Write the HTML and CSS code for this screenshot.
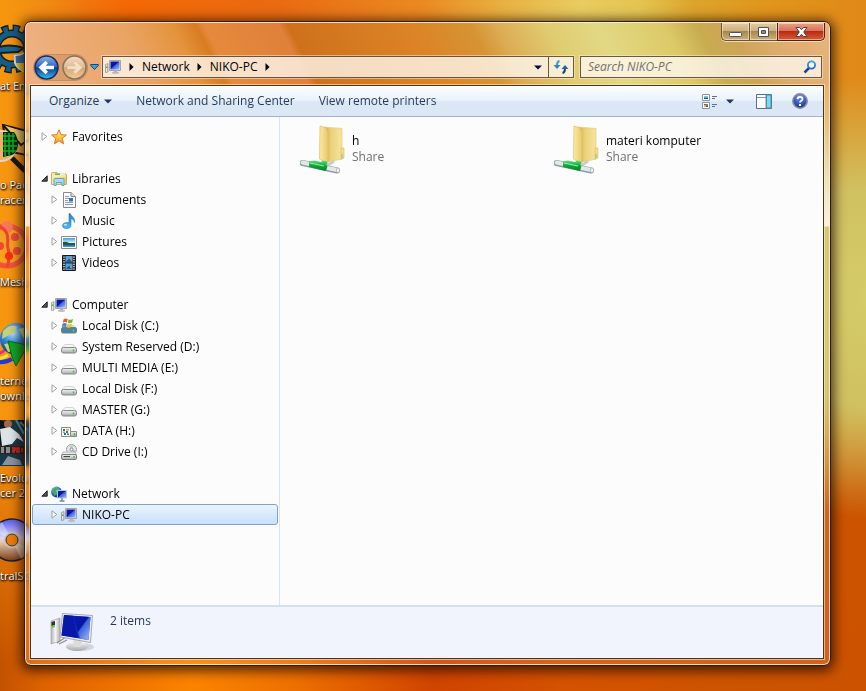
FILE: index.html
```html
<!DOCTYPE html>
<html lang="en">
<head>
<meta charset="utf-8">
<title>NIKO-PC</title>
<link rel="stylesheet" href="styles.css">
</head>
<body>
<svg class="defs" aria-hidden="true">
  <defs>
    <linearGradient id="screen" x1="0" y1="0" x2="1" y2="1"><stop offset="0" stop-color="#0a1cb4"/><stop offset=".45" stop-color="#0614a4"/><stop offset=".5" stop-color="#3a62dc"/><stop offset="1" stop-color="#a8c0f4"/></linearGradient>
    <linearGradient id="grey" x1="0" y1="0" x2="0" y2="1"><stop offset="0" stop-color="#f4f4f4"/><stop offset="1" stop-color="#a8a8ac"/></linearGradient>
    <linearGradient id="greyside" x1="0" y1="0" x2="1" y2="0"><stop offset="0" stop-color="#b4b4b4"/><stop offset=".5" stop-color="#f4f4f4"/><stop offset="1" stop-color="#b0b0b0"/></linearGradient>
    <linearGradient id="gold" x1="0" y1="0" x2="1" y2="0"><stop offset="0" stop-color="#fbeaa4"/><stop offset="1" stop-color="#e9ca66"/></linearGradient>
    <linearGradient id="goldback" x1="0" y1="0" x2="1" y2="0"><stop offset="0" stop-color="#d0aa48"/><stop offset=".4" stop-color="#ead27c"/><stop offset="1" stop-color="#f7e59c"/></linearGradient>
    <linearGradient id="star" x1="0" y1="0" x2="0" y2="1"><stop offset="0" stop-color="#fff3a0"/><stop offset=".6" stop-color="#fdc030"/><stop offset="1" stop-color="#f08a20"/></linearGradient>
    <linearGradient id="note" x1="0" y1="0" x2="0" y2="1"><stop offset="0" stop-color="#2a80cc"/><stop offset="1" stop-color="#48b8ee"/></linearGradient>
    <linearGradient id="sky" x1="0" y1="0" x2="0" y2="1"><stop offset="0" stop-color="#3a9ade"/><stop offset=".5" stop-color="#d4f2f6"/><stop offset=".56" stop-color="#1a6a60"/><stop offset=".75" stop-color="#1d5a80"/><stop offset="1" stop-color="#48b0d4"/></linearGradient>
    <linearGradient id="green" x1="0" y1="0" x2="0" y2="1"><stop offset="0" stop-color="#5fe080"/><stop offset=".5" stop-color="#0aa838"/><stop offset="1" stop-color="#04842a"/></linearGradient>
    <radialGradient id="globe" cx=".4" cy=".3" r=".7"><stop offset="0" stop-color="#b8e8fc"/><stop offset=".5" stop-color="#2d84d8"/><stop offset="1" stop-color="#0a3484"/></radialGradient>
    <radialGradient id="help" cx=".5" cy=".2" r=".8"><stop offset="0" stop-color="#6f96ec"/><stop offset="1" stop-color="#10309c"/></radialGradient>
    <linearGradient id="back" x1="0" y1="0" x2="0" y2="1"><stop offset="0" stop-color="#8ab4ec"/><stop offset=".48" stop-color="#2a64c4"/><stop offset=".52" stop-color="#08389c"/><stop offset="1" stop-color="#30c4f4"/></linearGradient>
    <linearGradient id="forward" x1="0" y1="0" x2="0" y2="1"><stop offset="0" stop-color="#f4dcc4"/><stop offset=".48" stop-color="#e4bc94"/><stop offset=".52" stop-color="#d8a470"/><stop offset="1" stop-color="#f0cc9c"/></linearGradient>
    <linearGradient id="lens" x1="0" y1="0" x2="0" y2="1"><stop offset="0" stop-color="#3aa4dc"/><stop offset="1" stop-color="#2468bc"/></linearGradient>
    <linearGradient id="disc" x1="0" y1="0" x2="0" y2="1"><stop offset="0" stop-color="#5458f0"/><stop offset=".45" stop-color="#dcd8f4"/><stop offset=".55" stop-color="#e4c8b0"/><stop offset="1" stop-color="#7c3c18"/></linearGradient>

    <symbol id="i-closed" viewBox="0 0 7 9"><path d="M1 .8 5.8 4.5 1 8.2Z" fill="#fff" stroke="#a0a0a0"/></symbol>
    <symbol id="i-open" viewBox="0 0 7 7"><path d="M6.2.8V6.2H.8Z" fill="#555" stroke="#222"/></symbol>
    <symbol id="i-star" viewBox="0 0 16 16"><path d="M8 .7 10 5.700 15.400 6 11.200 9.400 12.700 14.900 8 11.800 3.300 14.900 4.800 9.400.6 6 6 5.700Z" fill="url(#star)" stroke="#dc7a28"/></symbol>
    <symbol id="i-library" viewBox="0 0 16 16">
      <path d="M.5 13.500V2.500Q.5 1.500 1.500 1.500H6L7 3H14.500Q15.500 3 15.500 4V13.500Z" fill="url(#gold)" stroke="#d0ae58"/>
      <path d="M4 2.500H9V4H4Z" fill="#68b858"/><path d="M9 2.500H14V4H9Z" fill="#e8f0f8"/><path d="M1 5H15" stroke="#fff8d0"/>
      <path d="M3 14.500V8.500Q3 7.500 4 7.500H12Q13 7.500 13 8.500V14.500H10.800V11.500H5.200V14.500Z" fill="#a8dcf4" stroke="#4898c4" stroke-width=".8"/>
    </symbol>
    <symbol id="i-document" viewBox="0 0 16 16">
      <path d="M2.500.5H10L14.500 4.500V15.500H2.500Z" fill="#fcfcfc" stroke="#888"/><path d="M10 .5V4.500H14.500" fill="#dde" stroke="#888"/>
      <path d="M4 4.500H8M4 6.500H8M4 8.500H7M4 10.500H12M4 12.500H12" stroke="#8a9cb8"/><path d="M8 6H12V9.500H8Z" fill="#2f74b8"/>
    </symbol>
    <symbol id="i-music" viewBox="0 0 16 16">
      <path d="M8 .5 9.500.8C10 3.500 14.500 4.500 13.500 9.500 13 7 11.500 6 10 5.800V12Q10 15.500 5.500 15.500 1.500 15.500 1.500 12.700 1.500 9.800 5.500 9.500 7 9.400 8 10Z" fill="url(#note)" stroke="#2c78b8" stroke-width=".6"/>
      <ellipse cx="4.500" cy="11.700" rx="1.800" ry="1" fill="#b4e4fa"/>
    </symbol>
    <symbol id="i-picture" viewBox="0 0 16 16"><path d="M.5 2.500H15.500V14.500H.5Z" fill="#fff" stroke="#8c8c8c"/><path d="M2 4H14V13H2Z" fill="url(#sky)"/><path d="M2 8Q5 7 8 9L14 9V10H2Z" fill="#225a34"/></symbol>
    <symbol id="i-video" viewBox="0 0 16 16">
      <path d="M1.500.5H14.500V15.500H1.500Z" fill="#2c2c30" stroke="#18181c"/><path d="M4.500 1H11.500V7.300H4.500ZM4.500 8.500H11.500V15H4.500Z" fill="#4aa4e0"/>
      <path d="M5 7 8 3.500 11 7ZM5 14 8 10.500 11 14" fill="#24588c"/><path d="M9 2.500H11V4.500H9ZM9 11H11V13H9Z" fill="#d8845c"/>
      <path d="M3 1.500V15M13 1.500V15" stroke="#fff" stroke-width="1.200" stroke-dasharray="1.200 1.200"/>
    </symbol>
    <symbol id="i-computer" viewBox="0 0 16 16">
      <path d="M.5 5.500 3 4.500V13L.5 13.500Z" fill="url(#greyside)" stroke="#909090" stroke-width=".7"/><path d="M1 7.500H2.500V9H1Z" fill="#48b838"/>
      <path d="M4.500 1.500H15.500V11.500H4.500Z" fill="#e0e0e4" stroke="#a4a4a8"/><path d="M5.500 2.500H14.500V10.500H5.500Z" fill="url(#screen)"/>
      <path d="M9 11.500H12V13H9Z" fill="#b4b4b4"/><ellipse cx="10.500" cy="13.700" rx="3.600" ry="1.200" fill="#bcbcc0"/>
    </symbol>
    <symbol id="i-drive" viewBox="0 0 16 16">
      <path d="M1 8.500Q3 5.500 5 5.500H11Q13 5.500 15 8.500Z" fill="#f8f8f8" stroke="#c4c4c4" stroke-width=".7"/>
      <rect x=".5" y="8.500" width="15" height="5.500" rx="2" fill="url(#grey)" stroke="#85858a"/><path d="M12.500 10.500V12.500" stroke="#30c830" stroke-width="1.400"/>
    </symbol>
    <symbol id="i-system" viewBox="0 0 16 16">
      <path d="M1 10 3 7H13L15 10Z" fill="#d8dce0"/><rect x=".5" y="9.500" width="15" height="5.500" rx="1.500" fill="#4a86a0" stroke="#707c84"/><path d="M12.500 11.500V13.500" stroke="#50e050" stroke-width="1.400"/>
      <path d="M2.500 1.500Q4.500-.4 6.700 1L6 4.500Q4 3.300 1.800 4.800Z" fill="#e8582c"/><path d="M7.500 1.300Q9.800 2.500 12 1L11.200 4.500Q9 6 6.800 4.800Z" fill="#70b838"/>
      <path d="M1.500 5.700Q3.800 4.300 5.800 5.500L5 9Q3 7.800.8 9Z" fill="#3c88dc"/><path d="M6.500 5.800Q8.800 7 11 5.500L10.200 9Q8 10.300 5.800 9.200Z" fill="#f8c020"/>
    </symbol>
    <symbol id="i-data" viewBox="0 0 16 16">
      <path d="M.5 4.500H9.500V13.500H.5Z" fill="#f4fcfc" stroke="#888"/><path d="M2 6H4V8H2ZM5 8H7V10H5ZM3 10H5V12H3Z" fill="#386c88"/><path d="M5 6H8V7.500H5Z" fill="#e4a030"/><path d="M2 8.500H4V10H2Z" fill="#6ab0a8"/><path d="M6 10.500H8V12H6Z" fill="#587838"/>
      <path d="M9.500 8.500H15.500V13.500H9.500Z" fill="url(#grey)" stroke="#888"/><path d="M13.500 10V12.500" stroke="#30c830" stroke-width="1.400"/>
    </symbol>
    <symbol id="i-cd" viewBox="0 0 16 16">
      <circle cx="10.500" cy="5.500" r="5" fill="#e8e8ec" stroke="#9c9ca0"/><path d="M10.500 5.500 8 1.500 13 1.500Z" fill="#b4d8b8"/><path d="M10.500 5.500 15 7 13 9.500Z" fill="#b8b0d8"/><circle cx="10.500" cy="5.500" r="1.500" fill="#fff" stroke="#888"/>
      <path d="M2 8H14L15.500 11H.5Z" fill="#ececec" stroke="#a0a0a0" stroke-width=".7"/><rect x=".5" y="10.500" width="15" height="5" rx="1.500" fill="url(#grey)" stroke="#7c7c80"/><path d="M2.500 12.500H9" stroke="#444"/><path d="M13 12V14" stroke="#30c830" stroke-width="1.400"/>
    </symbol>
    <symbol id="i-network" viewBox="0 0 16 16">
      <circle cx="5.500" cy="6" r="5.400" fill="url(#globe)"/><path d="M2 3Q5 .5 7 2.500L5 5 6 8 3.500 10 2.500 6.500 1 6Z" fill="#3cb450"/>
      <path d="M6.500 4.500H15.500V12H6.500Z" fill="url(#screen)" stroke="#b8c4e0"/><path d="M11 12V14.500M8.500 15H13.500" stroke="#7484a4" stroke-width="1.500"/>
    </symbol>
    <symbol id="i-share" viewBox="0 0 48 50">
      <path d="M24 3 42 4.500V35L28 38Z" fill="url(#goldback)" stroke="#e4cc80" stroke-width=".7"/>
      <path d="M20 2 26 4 28 9V40L19.500 35Z" fill="url(#gold)" stroke="#dcbf6a" stroke-width=".7"/><path d="M41 24H44V34L41 35.500Z" fill="#f4dc90" stroke="#d8b860" stroke-width=".6"/><path d="M42 30V34" stroke="#6cc4c4"/>
      <path d="M25 42Q31 40 34 37" fill="none" stroke="#c8ccd0" stroke-width="3"/>
      <path d="M2.500 39 37 46.500" stroke="#909ca0" stroke-width="6" stroke-linecap="round"/><path d="M2.500 38.500 37 46" stroke="#e0e8ea" stroke-width="4" stroke-linecap="round"/>
      <path d="M9 37.500 14 36.500 21 38 23 36.500 27 37.500 27 40 26 41 27.500 42 26 47 9 43Z" fill="url(#green)"/>
      <path d="M10 39 24 42" stroke="#8cf0a0" stroke-width="1.200"/><ellipse cx="38" cy="46.300" rx="1.500" ry="2.500" fill="#f4f8f8" stroke="#98a0a4" stroke-width=".7"/>
    </symbol>
  </defs>
</svg>

<div class="desktop" aria-hidden="true">
  <div class="shortcut cheat">
    <svg width="48" height="50" viewBox="0 0 48 50"><circle cx="24" cy="25" r="21" fill="none" stroke="#0b2028" stroke-width="7" stroke-dasharray="7 3.996"/><circle cx="24" cy="25" r="15.500" fill="none" stroke="#0b2028" stroke-width="8"/><circle cx="24" cy="25" r="20" fill="none" stroke="#185c84" stroke-width="6" stroke-dasharray="4.500 5.972" stroke-dashoffset="-1.200"/><circle cx="24" cy="25" r="15.500" fill="none" stroke="#185c84" stroke-width="5"/><path d="M3 26Q20 18 36 24L30 28 12 29Z" fill="#1c668e" stroke="#0b2028" stroke-width="2"/><path d="M26 31Q33 31 37 27 41 31 46 31V39Q45 46 37 49 28 45 26 39Z" fill="#e8e4d4"/><path d="M27.500 32Q34 32 37 29V39H28Z" fill="#2c70b8"/><path d="M37 39H45Q44 45 37 48Z" fill="#2c70b8"/><path d="M28 39H37V48Q29 45 28 39Z" fill="#f0c830"/></svg>
    <span>at Engine</span>
  </div>
  <div class="shortcut packet">
    <svg width="48" height="50" viewBox="0 0 48 50"><path d="M18 2 50 10V34L22 28Z" fill="#d8ac44" stroke="#1c1404" stroke-width="2"/><path d="M18 2 36 22 50 12" fill="#ecc868" stroke="#1c1404" stroke-width="2"/><circle cx="16" cy="23" r="15" fill="#f0b060" stroke="#e4d4c0" stroke-width="2"/><path d="M18 9H29Q33 14 33 22 32 30 27 32L18 34Z" fill="#04280a"/><path d="M20 10V33M24 10V32M28 10V30M18 13H30M18 18H32M18 23H32M18 28H31" stroke="#08b424" stroke-width="1.500"/><path d="M27 35 40 48" stroke="#181818" stroke-width="5"/></svg>
    <span>o Packet<br>racer</span>
  </div>
  <div class="shortcut mesh">
    <svg width="48" height="50" viewBox="0 0 48 50"><circle cx="21" cy="26" r="20" fill="#f8a020" stroke="#f05438" stroke-width="5"/><circle cx="21" cy="7" r="6" fill="#f87858"/><path d="M13 6C26 12 20 22 22 28 24 36 23 42 21 47" fill="none" stroke="#ec4430" stroke-width="3"/><circle cx="29" cy="17" r="4" fill="#f04838"/><circle cx="14" cy="26" r="4" fill="#f04838"/><circle cx="31" cy="31" r="4" fill="#f04838"/><circle cx="23" cy="36" r="4" fill="#ff2c08"/></svg>
    <span>Mesh</span>
  </div>
  <div class="shortcut idm">
    <svg width="48" height="50" viewBox="0 0 48 50"><path d="M0 41Q14 46 24 40" fill="none" stroke="#2438d8" stroke-width="4"/><path d="M0 38Q12 42 20 36" fill="none" stroke="#f0e030" stroke-width="3"/><path d="M0 34Q10 38 18 30" fill="none" stroke="#d83878" stroke-width="3"/><circle cx="28" cy="20" r="16" fill="url(#globe)"/><path d="M15 12Q23 4 29 8L26 14 19 17 14 20ZM31 10 38 8 43 16 36 20ZM16 25 24 24 26 32 20 33Z" fill="#c8d078"/><path d="M20 22 48 28 36 33 28 47 24 38Z" fill="#10a428" stroke="#047010"/></svg>
    <span>ternet<br>ownload</span>
  </div>
  <div class="shortcut pes">
    <svg width="48" height="46" viewBox="0 0 48 46"><path d="M0 0H48V46H0Z" fill="#183848"/><path d="M0 0 12 5 8 28 0 25ZM18 0H48L30 20Z" fill="#101418"/><path d="M20 2 36 18M16 0 24 14" stroke="#4890ac" stroke-width="2"/><circle cx="8" cy="4" r="4" fill="#a06848"/><path d="M0 9 10 7 19 14 24 22 17 18 12 24 2 26Z" fill="#dce4e8"/><path d="M0 26H48V34H0Z" fill="#242424"/><path d="M1 28H4M1 30H4M1 32H4M6 28H10M6 30H10M6 32H10" stroke="#f4f4f4"/><path d="M12 28H15V30H13V32H15M17 28H19V32H17ZM22 28V32" fill="none" stroke="#e02828" stroke-width="1.500"/><path d="M8 36 20 40 22 45 2 45Z" fill="#88949c"/></svg>
    <span>Evolution<br>cer 2</span>
  </div>
  <div class="shortcut iso">
    <svg width="48" height="46" viewBox="0 0 48 46"><circle cx="22" cy="22" r="21" fill="url(#disc)" stroke="#202028" stroke-width="1.500"/><path d="M22 22 3 13Q5 6 12 4ZM22 22 41 31Q38 38 31 41Z" fill="#fff" opacity=".35"/><circle cx="22" cy="22" r="7" fill="#ee7c04" stroke="#c8c4c8" stroke-width="2"/><circle cx="22" cy="22" r="6" fill="none" stroke="#38343c" stroke-width="1"/></svg>
    <span>traISO</span>
  </div>
</div>

<main class="window">
  <header class="glass">
    <div class="caption">
      <button class="cap" aria-label="Minimize"><svg width="13" height="12" viewBox="0 0 13 12"><rect x=".5" y="6.500" width="12" height="4" rx="1" fill="#fff" stroke="#4c5060"/></svg></button>
      <button class="cap" aria-label="Maximize"><svg width="13" height="12" viewBox="0 0 13 12"><path d="M1.500 1.500H11.500V10.500H1.500ZM4.500 4.500V7.500H8.500V4.500Z" fill="#fff" fill-rule="evenodd" stroke="#4c5060"/></svg></button>
      <button class="cap close" aria-label="Close"><svg width="13" height="12" viewBox="0 0 13 12"><path d="M1 1.500H4.500L6.500 3.700 8.500 1.500H12L8.700 6 12 10.500H8.500L6.500 8.300 4.500 10.500H1L4.300 6Z" fill="#fff" stroke="#50404c"/></svg></button>
    </div>
    <nav class="navrow" aria-label="Address">
      <div class="travel">
        <button class="round" aria-label="Back"><svg width="25" height="25" viewBox="0 0 25 25"><circle cx="12.500" cy="12.500" r="11.500" fill="url(#back)" stroke="#1c2c54" stroke-width="1.500"/><path d="M4.500 12.500 11.500 5.800 14 8.300 11.700 10.700H20V14.300H11.700L14 16.700 11.500 19.200Z" fill="#fff"/></svg></button>
        <button class="round" aria-label="Forward"><svg width="25" height="25" viewBox="0 0 25 25"><circle cx="12.500" cy="12.500" r="11.500" fill="url(#forward)" stroke="#84725e" stroke-width="1.500"/><path d="M20.500 12.500 13.500 5.800 11 8.300 13.300 10.700H5V14.300H13.300L11 16.700 13.500 19.200Z" fill="#f4dec8" stroke="#d8b48c" stroke-width=".6"/></svg></button>
      </div>
      <button class="recent" aria-label="Recent pages"><svg width="9" height="6" viewBox="0 0 9 6"><path d="M.7.500H8.300V1.500L4.500 5.500.7 1.500Z" fill="#38a4dc" stroke="#144878"/></svg></button>
      <div class="address">
        <svg class="icon" width="16" height="16"><use href="#i-computer"/></svg>
        <svg class="sep" width="5" height="8" viewBox="0 0 5 8"><path d="M.5 0 4.500 4 .5 8Z"/></svg>
        <button class="crumb">Network</button>
        <svg class="sep" width="5" height="8" viewBox="0 0 5 8"><path d="M.5 0 4.500 4 .5 8Z"/></svg>
        <button class="crumb">NIKO-PC</button>
        <svg class="sep" width="5" height="8" viewBox="0 0 5 8"><path d="M.5 0 4.500 4 .5 8Z"/></svg>
        <button class="drop" aria-label="Previous locations"><svg width="8" height="5" viewBox="0 0 8 5"><path d="M0 .5H8L4 4.500Z" fill="#00084c"/></svg></button>
        <button class="refresh" aria-label="Refresh"><svg width="16" height="14" viewBox="0 0 16 14"><path d="M6.500 1Q4 1.500 4 5.500" fill="none" stroke="#3c98dc" stroke-width="2"/><path d="M.5 5H7.500L4 9Z" fill="#2c84d0"/><path d="M9.500 13Q12 12.500 12 8.500" fill="none" stroke="#183c88" stroke-width="2"/><path d="M8.500 9H15.500L12 5Z" fill="#2460b4"/></svg></button>
      </div>
      <label class="search"><input type="search" aria-label="Search NIKO-PC" placeholder="Search NIKO-PC"><svg width="14" height="14" viewBox="0 0 14 14"><path d="M1.500 12.500 6 8" stroke="#2040a0" stroke-width="2.500"/><circle cx="8.500" cy="5" r="3.600" fill="#f4f8fc" stroke="url(#lens)" stroke-width="1.800"/></svg></label>
    </nav>
  </header>

  <section class="client">
    <div class="toolbar">
      <button class="tool">Organize <svg width="8" height="5" viewBox="0 0 8 5"><path d="M0 .5H8L4 4.500Z" fill="#1e395b"/></svg></button>
      <button class="tool">Network and Sharing Center</button>
      <button class="tool">View remote printers</button>
      <div class="views">
        <button class="tool" aria-label="Change your view"><svg width="17" height="17" viewBox="0 0 17 17"><path d="M1.500 1.500H8.500V7.500H1.500ZM1.500 9.500H8.500V15.500H1.500Z" fill="#fff" stroke="#8494a8"/><path d="M3 3H7V4.500H3Z" fill="#80c4e0"/><path d="M3 4.500H7V6H3Z" fill="#185c74"/><path d="M3 11H5V12.500H3Z" fill="#d83828"/><path d="M5 11H7V12.500H5Z" fill="#38a838"/><path d="M3 12.500H5V14H3Z" fill="#e8c020"/><path d="M5 12.500H7V14H5Z" fill="#4038c0"/><path d="M11 3.500H16M11 5.500H14M11 11.500H16M11 13.500H14" stroke="#607084"/></svg></button>
        <button class="tool" aria-label="More options"><svg width="8" height="5" viewBox="0 0 8 5"><path d="M0 .5H8L4 4.500Z" fill="#1e395b"/></svg></button>
      </div>
      <button class="tool" aria-label="Show the preview pane"><svg width="16" height="15" viewBox="0 0 16 15"><path d="M.5.500H15.500V14.500H.5Z" fill="#fff" stroke="#50708c"/><path d="M1 3.500H10M10 1V14" stroke="#7c94a8"/><path d="M10.500 1H15V14H10.500Z" fill="#8cd4ec" stroke="#3c94b4"/></svg></button>
      <button class="tool" aria-label="Get help"><svg width="16" height="16" viewBox="0 0 16 16"><circle cx="8" cy="8" r="7.200" fill="url(#help)" stroke="#8c8c94" stroke-width="1.500"/><path d="M5.500 6.200Q5.500 3.800 8 3.800 10.500 3.800 10.500 6 10.500 7.200 9 8 8 8.500 8 9.500" fill="none" stroke="#fff" stroke-width="1.800"/><path d="M7 11H9V13H7Z" fill="#fff"/></svg></button>
    </div>

    <div class="panes">
      <nav class="tree" aria-label="Folders">
        <ul>
          <li><button class="node"><svg class="arrow"><use href="#i-closed"/></svg><svg class="icon"><use href="#i-star"/></svg>Favorites</button></li>
        </ul>
        <ul>
          <li><button class="node"><svg class="arrow"><use href="#i-open"/></svg><svg class="icon"><use href="#i-library"/></svg>Libraries</button>
            <ul>
              <li><button class="node"><svg class="arrow"><use href="#i-closed"/></svg><svg class="icon"><use href="#i-document"/></svg>Documents</button></li>
              <li><button class="node"><svg class="arrow"><use href="#i-closed"/></svg><svg class="icon"><use href="#i-music"/></svg>Music</button></li>
              <li><button class="node"><svg class="arrow"><use href="#i-closed"/></svg><svg class="icon"><use href="#i-picture"/></svg>Pictures</button></li>
              <li><button class="node"><svg class="arrow"><use href="#i-closed"/></svg><svg class="icon"><use href="#i-video"/></svg>Videos</button></li>
            </ul>
          </li>
        </ul>
        <ul>
          <li><button class="node"><svg class="arrow"><use href="#i-open"/></svg><svg class="icon"><use href="#i-computer"/></svg>Computer</button>
            <ul>
              <li><button class="node"><svg class="arrow"><use href="#i-closed"/></svg><svg class="icon"><use href="#i-system"/></svg>Local Disk (C:)</button></li>
              <li><button class="node"><svg class="arrow"><use href="#i-closed"/></svg><svg class="icon"><use href="#i-drive"/></svg>System Reserved (D:)</button></li>
              <li><button class="node"><svg class="arrow"><use href="#i-closed"/></svg><svg class="icon"><use href="#i-drive"/></svg>MULTI MEDIA (E:)</button></li>
              <li><button class="node"><svg class="arrow"><use href="#i-closed"/></svg><svg class="icon"><use href="#i-drive"/></svg>Local Disk (F:)</button></li>
              <li><button class="node"><svg class="arrow"><use href="#i-closed"/></svg><svg class="icon"><use href="#i-drive"/></svg>MASTER (G:)</button></li>
              <li><button class="node"><svg class="arrow"><use href="#i-closed"/></svg><svg class="icon"><use href="#i-data"/></svg>DATA (H:)</button></li>
              <li><button class="node"><svg class="arrow"><use href="#i-closed"/></svg><svg class="icon"><use href="#i-cd"/></svg>CD Drive (I:)</button></li>
            </ul>
          </li>
        </ul>
        <ul>
          <li><button class="node"><svg class="arrow"><use href="#i-open"/></svg><svg class="icon"><use href="#i-network"/></svg>Network</button>
            <ul>
              <li><button class="node selected"><svg class="arrow"><use href="#i-closed"/></svg><svg class="icon"><use href="#i-computer"/></svg>NIKO-PC</button></li>
            </ul>
          </li>
        </ul>
      </nav>

      <div class="files">
        <button class="tile"><svg width="48" height="50"><use href="#i-share"/></svg><span class="tile-text"><span>h</span><span class="kind">Share</span></span></button>
        <button class="tile"><svg width="48" height="50"><use href="#i-share"/></svg><span class="tile-text"><span>materi komputer</span><span class="kind">Share</span></span></button>
      </div>
    </div>

    <footer class="details">
      <svg width="48" height="44" viewBox="0 0 48 44">
        <path d="M2 8 11 5V28L2 31Z" fill="url(#greyside)" stroke="#a4a4a4" stroke-width=".7"/><path d="M2.500 9 6 8V12L2.500 13Z" fill="#303438"/><path d="M3 13 6 12V14L3 15Z" fill="#60d030"/>
        <path d="M8 30 17 24M10 31 18 27" stroke="#8c8c90" stroke-width="1.200"/>
        <ellipse cx="31" cy="34" rx="14" ry="4" fill="#d0d4dc"/><ellipse cx="28" cy="33.500" rx="11" ry="4.500" fill="url(#grey)"/><path d="M24 24 33 26 32 34H25Z" fill="#dcdcdc"/>
        <path d="M13.500.5 43.500 2.500 41.500 29.500 11 24Z" fill="#ececf0" stroke="#a8a8b0"/><path d="M15 2 41.500 4 39.500 27 12.500 22.500Z" fill="#1034c4"/><path d="M24 3 41.500 4 39.500 27 31 25.500Z" fill="url(#screen)"/><path d="M15 2 24 2.700 29 25 12.500 22.500Z" fill="#0818a8"/>
      </svg>
      <span>2 items</span>
    </footer>
  </section>
</main>
</body>
</html>
```
FILE: styles.css
```css
* { box-sizing: border-box; }

body {
  margin: 0;
  min-height: 100vh;
  padding: 21px 35px 25px 24px;
  display: flex;
  position: relative;
  overflow: hidden;
  font: 12px/16px "Open Sans", "Noto Sans", sans-serif;
  color: #000;
  background:
    linear-gradient(90deg, #f8960e 0%, rgba(248, 150, 14, 0) 10%),
    linear-gradient(90deg, #e08a1c 0%, #ee7a10 8%, #f46804 15%, #e96a12 32%, #ea8a20 49%, #e8b040 58%, #e8cc60 67%, #e4c450 74%, #dca42c 80%, #e0961c 88%, #e08818 100%);
}

/* Lower half of the wallpaper, faded into the upper half */
body::before {
  content: "";
  position: absolute;
  inset: 0;
  background: linear-gradient(90deg, #c25200 0%, #de6200 5%, #fa8400 22%, #ee7000 34%, #d04400 50%, #d45200 65%, #cc5400 100%);
  mask-image: linear-gradient(180deg, transparent 60%, #000 96%);
}

ul { list-style: none; margin: 0; padding: 0; }

svg { display: block; flex: none; }

.defs { position: absolute; width: 0; height: 0; }

button {
  border: 0;
  padding: 0;
  background: none;
  font: inherit;
  color: inherit;
  display: flex;
  align-items: center;
}

/* Desktop shortcuts, partly covered by the window */
.desktop {
  position: absolute;
  inset: 0;
  background:
    radial-gradient(ellipse 20% 32% at 100% 43%, #d4cc68 0%, #d0c060 50%, rgba(208, 160, 60, 0) 100%),
    radial-gradient(ellipse 26% 52% at 100% 100%, #cc5200 0%, #cc5400 55%, rgba(204, 84, 0, 0) 100%);
}

.shortcut {
  position: absolute;
  display: flex;
  flex-direction: column;
  gap: 4px;
  line-height: 15px;
  font-size: 11px;
  color: #fff;
  white-space: nowrap;
  text-shadow: 0 1px 2px #000, 1px 1px 2px #000;
}
.cheat { left: -12px; top: 24px; }
.cheat span { margin-left: 12px; }
.packet { left: -15px; top: 123px; }
.packet span { margin-left: 15px; }
.mesh { left: -14px; top: 220px; }
.mesh span { margin-left: 14px; }
.idm { left: -12px; top: 319px; }
.idm span { margin-left: 12px; }
.pes { left: 0; top: 420px; }
.iso { left: -10px; top: 518px; }
.iso span { margin-left: 10px; }

/* Window frame */
.window {
  position: relative;
  flex: 1;
  min-width: 0;
  display: flex;
  flex-direction: column;
  padding: 0 6px 6px 5px;
  border: 1px solid #2c1c0c;
  border-radius: 7px;
  background: linear-gradient(180deg, rgba(255, 255, 255, .3) 0, rgba(255, 255, 255, .35) 100px, rgba(255, 255, 255, .8) 204px, rgba(255, 255, 255, .1) 205px, rgba(255, 255, 255, .1) 100%);
  backdrop-filter: blur(3px);
  box-shadow: inset 0 0 0 1px rgba(255, 236, 214, .85), 0 2px 12px 3px rgba(30, 10, 0, .75);
}

.glass {
  margin: 1px -5px 0 -4px;
  padding: 0 4px 5px;
  border-radius: 5px 5px 0 0;
  background: linear-gradient(63deg, #eeb080 3%, #e9a464 15%, #e5943e 21%, #d87c22 24%, #e58a3c 25%, #e0803a 34%, #cf711c 35%, #dc8426 50%, #d69434 57%, #dcac54 60%, #e0cc70 66%, #e2d884 72%, #dcca68 80%, #c8ac50 84%, #cfa458 88%, #dcac6c 92%, #e8b47c 100%);
}

.caption {
  height: 31px;
  display: flex;
  justify-content: flex-end;
  align-items: flex-start;
}

.cap {
  width: 28px;
  height: 18px;
  justify-content: center;
  border: 1px solid #6a5438;
  border-top: 0;
  border-right: 0;
  background: linear-gradient(180deg, #e0cca0 0%, #cdb080 45%, #a8874c 50%, #cdb078 100%);
  box-shadow: inset 0 0 0 1px rgba(255, 245, 220, .5), 0 1px 0 rgba(255, 245, 220, .7);
}
.cap:first-child { border-radius: 0 0 0 5px; }
.cap.close {
  width: 48px;
  border-right: 1px solid #5c1c10;
  border-color: #5c1c10;
  border-radius: 0 0 5px 0;
  background: linear-gradient(180deg, #e8a488 0%, #d8705c 45%, #b82c14 50%, #d85c38 100%);
}

.navrow {
  height: 26px;
  display: flex;
  align-items: center;
  padding: 0 3px 0 4px;
}

.travel {
  display: flex;
  gap: 3px;
  border-radius: 13px;
  background: rgba(150, 90, 40, .2);
  box-shadow: 0 0 0 1px rgba(130, 80, 40, .35);
}
.recent { margin: 0 3px; }

.address, .search {
  height: 22px;
  display: flex;
  align-items: center;
  border: 1px solid rgba(70, 50, 30, .8);
  background: rgba(255, 250, 242, .78);
  box-shadow: 0 0 0 1px rgba(255, 240, 215, .5);
}
.address { flex: 1; min-width: 0; padding-left: 2px; }
.address .icon { margin-right: 8px; }
.crumb { margin: 0 7px 0 8px; }
.drop { margin-left: auto; padding: 0 6px; }
.refresh { width: 25px; height: 20px; justify-content: center; border-left: 1px solid rgba(70, 50, 30, .8); }

.search { flex: 0 1 242px; margin-left: 6px; padding: 0 4px 0 7px; }
.search input {
  flex: 1;
  min-width: 0;
  border: 0;
  padding: 0;
  outline: 0;
  background: none;
  font: italic 12px/16px "Open Sans", "Noto Sans", sans-serif;
}
.search input::placeholder { color: #74706a; opacity: 1; }

/* Client area */
.client {
  flex: 1;
  display: flex;
  flex-direction: column;
  border: 1px solid #4c3418;
  background: #fcfcfc;
  box-shadow: 0 0 0 1px rgba(255, 236, 214, .6);
}

.toolbar {
  height: 31px;
  display: flex;
  align-items: center;
  padding: 0 15px 0 18px;
  color: #1e395b;
  border-bottom: 1px solid #a0b4cf;
  background: linear-gradient(180deg, #fcfeff 0%, #e9f2fb 48%, #dce6f4 52%, #dce8f6 100%);
}
.tool { gap: 5px; margin-right: 24px; white-space: nowrap; }
.tool:last-child { margin-right: 0; }
.views { display: flex; margin-left: auto; }
.views .tool { margin-right: 8px; }
.views .tool:last-child { margin-right: 22px; }
.views ~ .tool { margin-right: 20px; }
.views ~ .tool:last-child { margin-right: 0; }

.panes { flex: 1; display: flex; }

.tree {
  width: 249px;
  padding: 9px 1px 0;
  display: flex;
  flex-direction: column;
  gap: 21px;
  border-right: 1px solid #d6e5f5;
}
.node {
  width: 100%;
  height: 21px;
  padding-left: 8px;
  border: 1px solid transparent;
  border-radius: 3px;
  white-space: nowrap;
}
.node .arrow { width: 7px; height: 9px; margin-right: 3px; }
.node .icon { width: 16px; height: 16px; margin-right: 5px; }
ul ul .node { padding-left: 18px; }
.node.selected {
  border-color: #7da2ce;
  background: linear-gradient(180deg, #ebf4fd, #c8dffc);
}

.files {
  flex: 1;
  display: flex;
  flex-wrap: wrap;
  align-content: flex-start;
  padding: 7px 0 0 20px;
}
.tile { width: 254px; gap: 4px; text-align: left; }
.tile-text { display: flex; flex-direction: column; }
.kind { color: #6d6d6d; }

.details {
  height: 53px;
  display: flex;
  padding: 6px 18px 0;
  gap: 13px;
  color: #1e395b;
  border-top: 2px solid #d2e1f1;
  background: #f1f4fc;
}
```
